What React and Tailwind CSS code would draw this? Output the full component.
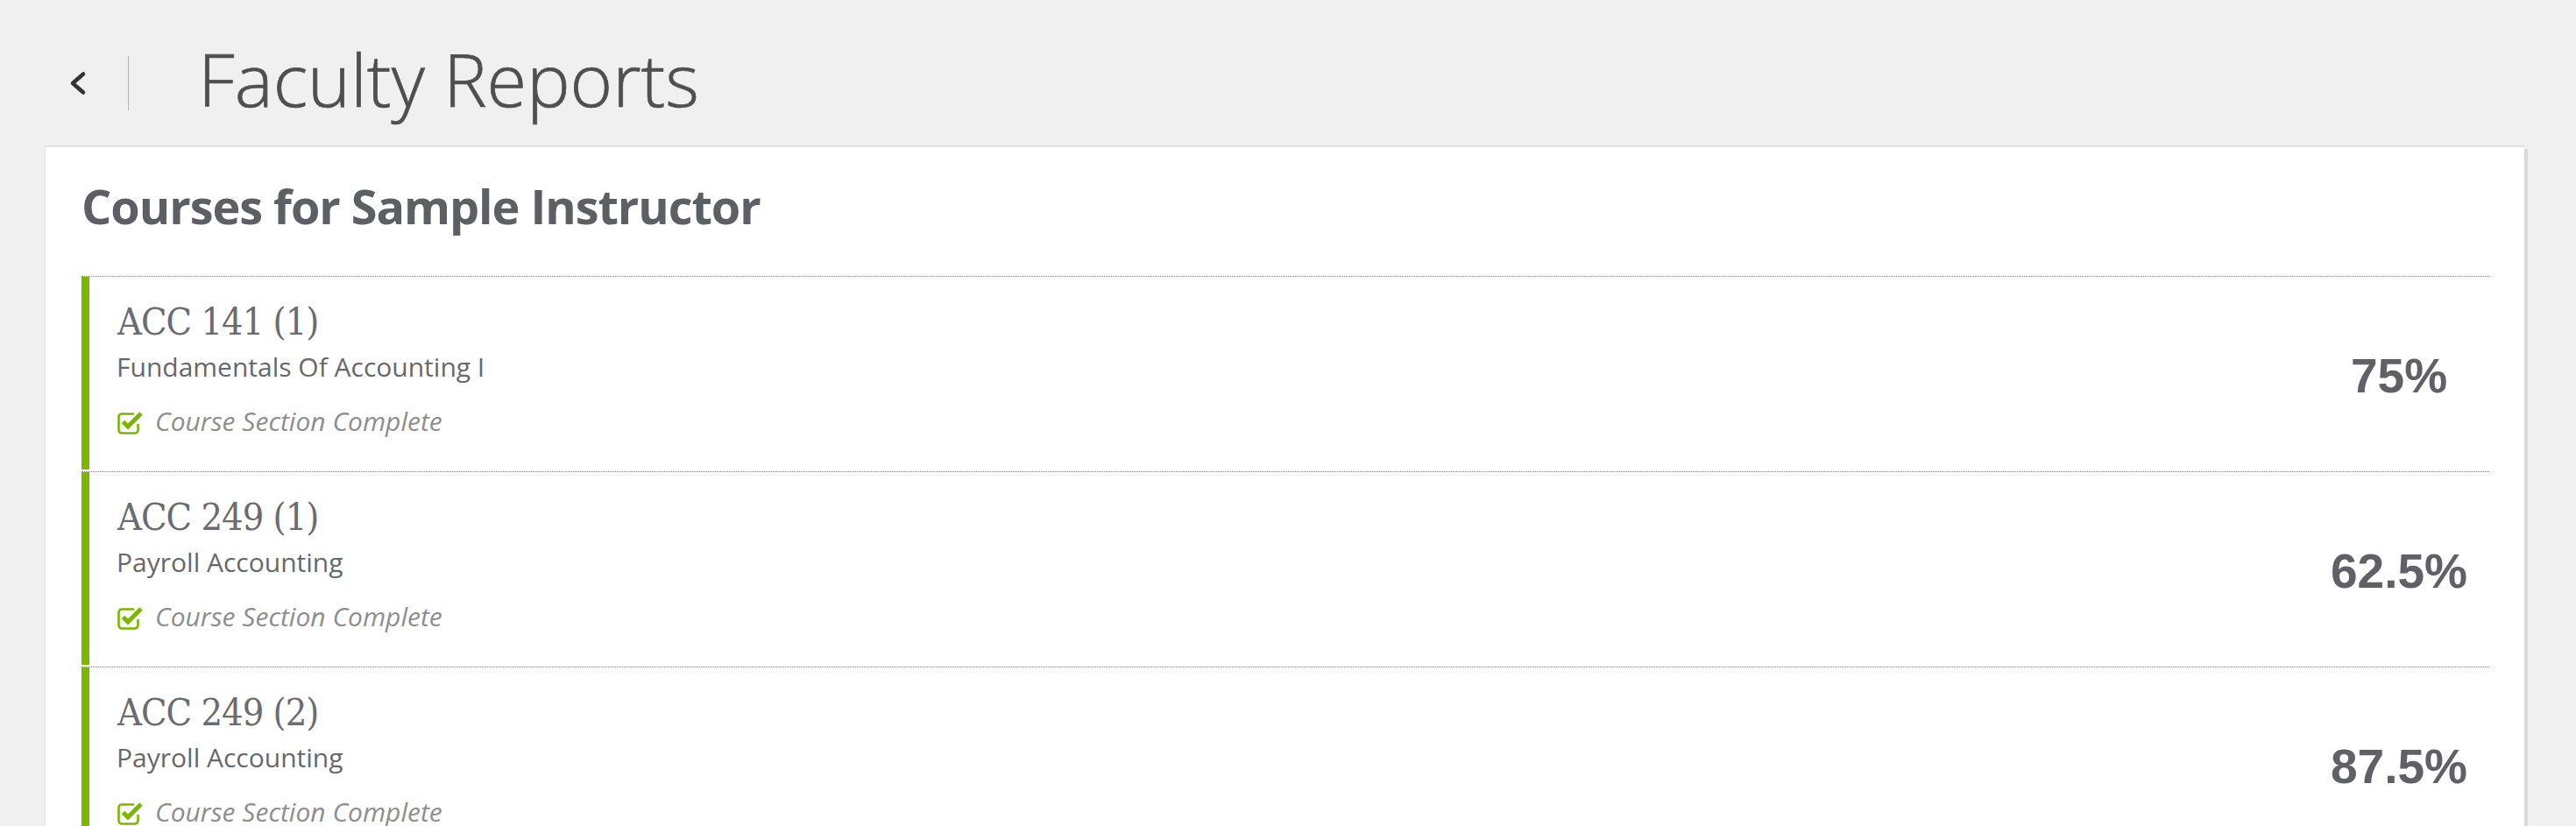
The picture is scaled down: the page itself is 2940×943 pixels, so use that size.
import React from 'react';

const courses = [
  { code: 'ACC 141 (1)', name: 'Fundamentals Of Accounting I', score: '75%' },
  { code: 'ACC 249 (1)', name: 'Payroll Accounting', score: '62.5%' },
  { code: 'ACC 249 (2)', name: 'Payroll Accounting', score: '87.5%' },
];

const CheckSquare = () => (
  <svg width="32" height="29" viewBox="0 0 32 29" fill="none">
    <path
      d="M20 5.5 H6 a3.5 3.5 0 0 0 -3.5 3.5 V24 a3.5 3.5 0 0 0 3.5 3.5 H21 a3.5 3.5 0 0 0 3.5 -3.5 V17"
      stroke="#7ab800"
      strokeWidth="2.6"
    />
    <path d="M7.5 14.5 L13 20 L28 5" stroke="#7ab800" strokeWidth="5" strokeLinejoin="miter" />
  </svg>
);

const CourseRow = ({ course }) => (
  <div className="border-t border-dotted border-[#8a8a8a] pb-[2px]">
    <div className="flex h-[220px] border-l-[9px] border-[#7ab800]">
      <div className="flex-1 pl-[31px] pt-[30px]">
        <div className="ml-[1px] font-['DejaVu_Serif',serif] text-[43px] leading-none tracking-[-1px] text-[#6a6c70] [font-stretch:condensed]">
          {course.code}
        </div>
        <div className="mt-[15px] font-['Open_Sans',sans-serif] text-[30px] leading-none text-[#66686c]">
          {course.name}
        </div>
        <div className="mt-[32px] flex items-center gap-[12px]">
          <CheckSquare />
          <span className="font-['Open_Sans',sans-serif] text-[30px] italic leading-none text-[#8e8e8e]">
            Course Section Complete
          </span>
        </div>
      </div>
      <div className="flex w-[206px] items-center justify-center pt-[6px] font-['Liberation_Sans',Arial,sans-serif] text-[55px] font-bold leading-none text-[#5f6166]">
        {course.score}
      </div>
    </div>
  </div>
);

export default function App() {
  return (
    <div className="min-h-screen bg-[#f0f0f0] pl-[51px] pr-[59px]">
      <div className="flex items-center pl-[28px] pt-[48px]">
        <svg className="mt-[10px]" width="20" height="28" viewBox="0 0 20 28" fill="none">
          <polyline
            points="16,3.5 4,14 16,24.5"
            stroke="#333"
            strokeWidth="4.5"
            strokeLinecap="round"
            strokeLinejoin="round"
          />
        </svg>
        <div className="ml-[47px] mt-[10px] h-[62px] w-px bg-[#b3b3b3]" />
        <h1 className="ml-[79px] font-['Open_Sans',sans-serif] text-[83px] font-light leading-none text-[#4f4f4f] [-webkit-text-stroke:0.7px_#4f4f4f]">
          Faculty Reports
        </h1>
      </div>
      <div className="mt-[35px] border-l border-t-2 border-[#e2e2e2] bg-white pb-10 pl-[41px] pr-[40px] pt-[40px] shadow-[4px_4px_0_#d9d9d9]">
        <h2 className="mb-[53px] font-['Open_Sans',sans-serif] text-[54px] font-bold leading-none tracking-[-1.05px] text-[#5c5f64]">
          Courses for Sample Instructor
        </h2>
        {courses.map((c) => (
          <CourseRow key={c.code} course={c} />
        ))}
      </div>
    </div>
  );
}
